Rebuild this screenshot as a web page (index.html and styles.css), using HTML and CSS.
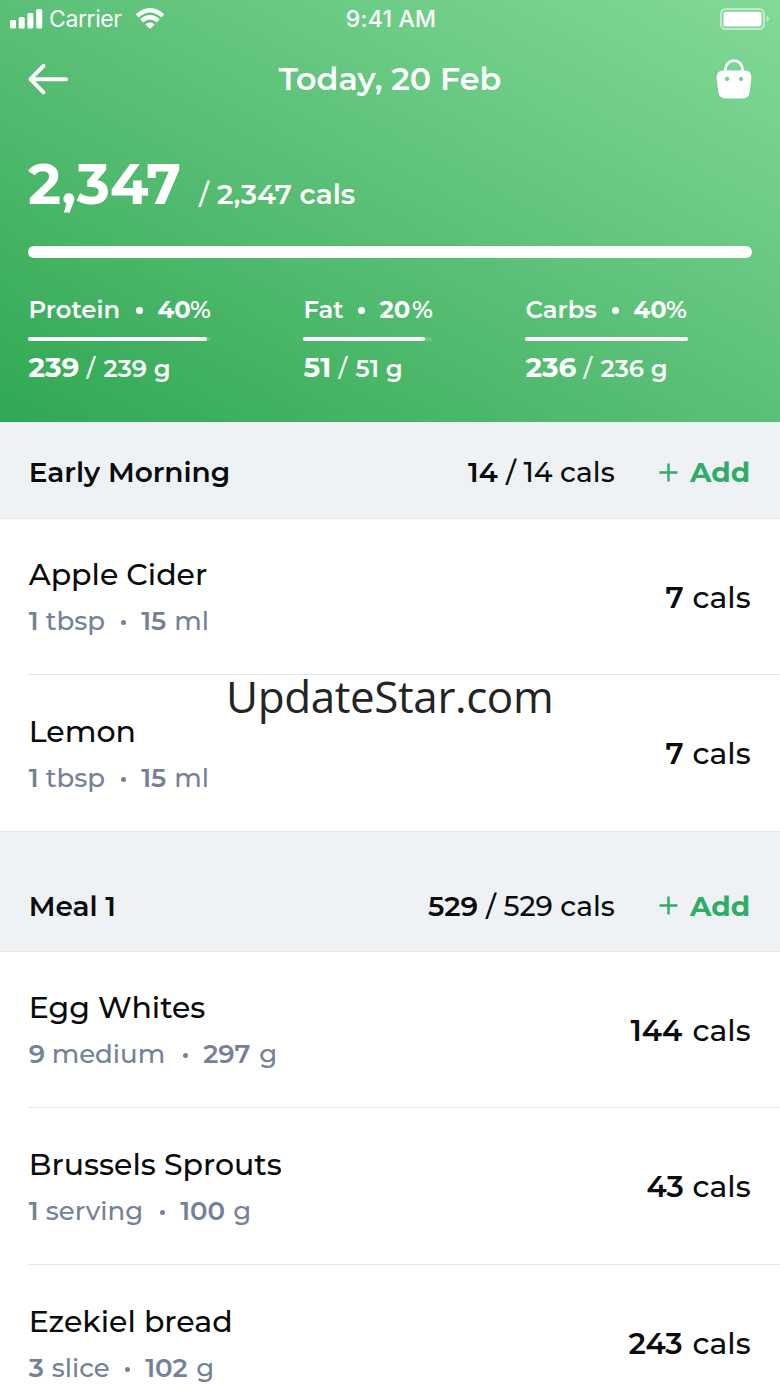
FILE: index.html
```
<!DOCTYPE html>
<html lang="en">
<head>
<meta charset="utf-8">
<title>Today, 20 Feb</title>
<link rel="stylesheet" href="styles.css">
</head>
<body>
<main class="app">
  <header class="hero">
    <div class="status">
      <div class="status-left">
        <svg class="signal" width="33" height="20" viewBox="0 0 33 20" fill="#fff"><rect x="0" y="11" width="6" height="8.500" rx="1.500"/><rect x="8.700" y="8" width="6" height="11.500" rx="1.500"/><rect x="17.400" y="4" width="6" height="15.500" rx="1.500"/><rect x="26.200" y="0" width="6" height="19.500" rx="1.500"/></svg>
        <span class="carrier">Carrier</span>
        <svg class="wifi" width="30" height="22" viewBox="0 0 30 22"><g fill="none" stroke="#fff" stroke-width="4.200"><path d="M2.200 7.800 Q15 -3.400 27.800 7.800"/><path d="M6.700 12.800 Q15 5.800 23.300 12.800"/></g><path d="M10.400 16.300 Q15 12.700 19.600 16.300 L15.900 20.200 Q15 21 14.100 20.200Z" fill="#fff"/></svg>
      </div>
      <span class="clock">9:41 AM</span>
      <svg class="battery" width="50" height="22" viewBox="0 0 50 22"><rect x="1" y="1" width="43" height="20" rx="4.500" fill="none" stroke="#fff" stroke-opacity=".5" stroke-width="2"/><rect x="3.500" y="3.700" width="38" height="14.800" rx="2" fill="#fff"/><path d="M46.500 7.500 Q49 9 49 10.800 Q49 12.500 46.500 14Z" fill="#fff" fill-opacity=".5"/></svg>
    </div>
    <nav class="nav">
      <svg width="42" height="34" viewBox="0 0 42 34" fill="none" stroke="#fff" stroke-width="4" stroke-linecap="round" stroke-linejoin="round"><path d="M39 17.200H3.500M16.500 3.800 3.500 17.200 16.500 30.300"/></svg>
      <h1 class="title">Today, 20 Feb</h1>
      <svg width="36" height="42" viewBox="0 0 36 42"><path d="M9.500 14V11.200a8.500 8.500 0 0 1 17 0V14" fill="none" stroke="#fff" stroke-width="2.800"/><path fill="#fff" fill-rule="evenodd" d="M7.500 12.500H28.500Q35.600 12.500 35.400 19.500L33.800 33.500Q33 40.500 26 40.500H10Q3 40.500 2.200 33.500L.6 19.500Q.4 12.500 7.500 12.500ZM11.100 18.800a2.200 2.200 0 1 0 .01 0ZM25 18.800a2.200 2.200 0 1 0 .01 0Z"/></svg>
    </nav>
    <div class="total">
      <span class="total-now">2,347</span>
      <span class="total-slash">/</span>
      <span class="total-goal">2,347 cals</span>
    </div>
    <div class="bar"></div>
    <div class="macros">
      <section class="macro protein">
        <div class="macro-head"><span class="macro-name">Protein</span><i class="dot"></i><b>40</b><span>%</span></div>
        <div class="track"><div class="fill"></div></div>
        <div class="macro-val"><b>239</b><span class="slash">/</span><span>239 g</span></div>
      </section>
      <section class="macro fat">
        <div class="macro-head"><span class="macro-name">Fat</span><i class="dot"></i><b>20</b><span>%</span></div>
        <div class="track"><div class="fill"></div></div>
        <div class="macro-val"><b>51</b><span class="slash">/</span><span>51 g</span></div>
      </section>
      <section class="macro carbs">
        <div class="macro-head"><span class="macro-name">Carbs</span><i class="dot"></i><b>40</b><span>%</span></div>
        <div class="track"><div class="fill"></div></div>
        <div class="macro-val"><b>236</b><span class="slash">/</span><span>236 g</span></div>
      </section>
    </div>
  </header>

  <section class="meal">
    <div class="meal-head">
      <h2>Early Morning</h2>
      <div class="meal-cals m14"><b>14</b><span class="slash">/</span><span>14 cals</span></div>
      <div class="add"><svg width="19" height="19" viewBox="0 0 19 19" stroke="#2fac66" stroke-width="2.400"><path d="M.5 9.500H18.500M9.500 .5V18.500"/></svg><span>Add</span></div>
    </div>
    <article class="food">
      <div><h3>Apple Cider</h3><p class="tbsp"><b>1</b><span class="unit">tbsp</span><i class="dot"></i><b class="amt">15</b><span>ml</span></p></div>
      <div class="cals c7"><b>7</b><span>cals</span></div>
    </article>
    <article class="food">
      <div><h3>Lemon</h3><p class="tbsp"><b>1</b><span class="unit">tbsp</span><i class="dot"></i><b class="amt">15</b><span>ml</span></p></div>
      <div class="cals c7"><b>7</b><span>cals</span></div>
    </article>
  </section>

  <section class="meal">
    <div class="meal-head spaced">
      <h2>Meal 1</h2>
      <div class="meal-cals m529"><b>529</b><span class="slash">/</span><span>529 cals</span></div>
      <div class="add"><svg width="19" height="19" viewBox="0 0 19 19" stroke="#2fac66" stroke-width="2.400"><path d="M.5 9.500H18.500M9.500 .5V18.500"/></svg><span>Add</span></div>
    </div>
    <article class="food">
      <div><h3>Egg Whites</h3><p class="medium"><b>9</b><span class="unit">medium</span><i class="dot"></i><b class="amt">297</b><span>g</span></p></div>
      <div class="cals c144"><b>144</b><span>cals</span></div>
    </article>
    <article class="food">
      <div><h3>Brussels Sprouts</h3><p class="serving"><b>1</b><span class="unit">serving</span><i class="dot"></i><b class="amt">100</b><span>g</span></p></div>
      <div class="cals c43"><b>43</b><span>cals</span></div>
    </article>
    <article class="food">
      <div><h3>Ezekiel bread</h3><p class="slice"><b>3</b><span class="unit">slice</span><i class="dot"></i><b class="amt">102</b><span>g</span></p></div>
      <div class="cals c243"><b>243</b><span>cals</span></div>
    </article>
  </section>
  <div class="watermark">UpdateStar.com</div>
</main>
</body>
</html>
```
FILE: styles.css
```
* { box-sizing: border-box; }
body { margin: 0; font-family: Montserrat, Inter, sans-serif; font-weight: 500; color: #090b0c; background: #fff; }
h1, h2, h3, p { margin: 0; font-weight: inherit; }
span, b { flex: none; white-space: nowrap; }
svg { display: block; flex: none; }
.app { position: relative; width: 780px; height: 1387px; overflow: hidden; }

/* green summary */
.hero { height: 422px; color: #fff; background: linear-gradient(to top right, #30a853 0%, #5bc077 50%, #82da97 100%); }
.status { height: 38px; padding: 0 10px 0 10px; display: grid; grid-template-columns: 1fr auto 1fr; align-items: center; font-family: Inter, sans-serif; font-size: 23px; line-height: 38px; }
.status-left { display: flex; align-items: center; }
.carrier { width: 86px; margin-left: 6px; font-weight: 400; letter-spacing: -.4px; }
.clock { margin-left: 2px; letter-spacing: .2px; }
.battery { justify-self: end; }
.nav { height: 82px; padding: 0 28px 0 27px; display: flex; align-items: center; justify-content: space-between; }
.title { margin-right: 5px; padding-bottom: 1px; font-size: 31.8px; font-weight: 600; }
.total { height: 85px; margin-top: 39px; margin-bottom: 2px; padding-left: 28px; display: flex; align-items: baseline; line-height: 50px; }
.total-now { width: 171px; font-size: 56px; font-weight: 700; }
.total-slash { width: 18px; font-size: 28px; font-weight: 500; }
.total-goal { font-size: 28px; font-weight: 600; }
.bar { height: 12px; margin: 0 28px; border-radius: 6px; background: #fff; }
.macros { display: flex; padding: 35px 28px 0; }
.protein { width: 275px; }
.fat { width: 222px; }
.macro-head, .macro-val { display: flex; align-items: baseline; font-size: 24.3px; font-weight: 600; line-height: 32px; }
.macro-head { padding-left: .5px; }
.macro-head .dot { width: 7px; height: 7px; margin-right: 15px; align-self: center; margin-top: 2px; }
.macro-head b { width: 32.5px; font-weight: 700; }
.protein .macro-name { width: 107px; }
.fat .macro-name { width: 54px; }
.carbs .macro-name { width: 86px; }
.dot { flex: none; width: 5px; height: 5px; border-radius: 50%; background: currentColor; }
.track { height: 4px; margin: 12px 0 10px; border-radius: 2px; background: rgba(255,255,255,.16); }
.fill { height: 4px; border-radius: 2px; background: #fff; }
.protein .track { width: 183px; }
.protein .fill { width: 179px; }
.fat .track { width: 129px; }
.fat .fill { width: 122px; }
.carbs .track { width: 163px; }
.macro-val { padding-left: .5px; }
.macro-val b { width: 58px; font-size: 28px; font-weight: 700; }
.macro-val .slash { width: 17px; font-weight: 500; }
.fat .macro-val b { width: 35px; }

/* meal sections */
.meal-head { display: flex; align-items: center; height: 97px; padding: 4px 30px 0 28.7px; font-size: 28px; background: #eef2f5; border-bottom: 1px solid #e2e6e9; }
.meal-head.spaced { height: 121px; padding-top: 28px; border-top: 1px solid #e2e6e9; }
.meal-head h2 { flex: 1; font-size: 28px; font-weight: 600; }
.meal-cals { display: flex; }
.meal-cals b { font-weight: 600; }
.m14 { width: 191px; }
.m14 b { width: 38px; }
.m529 { width: 231px; }
.m529 b { width: 58px; }
.meal-cals .slash { width: 17.5px; }
.add { display: flex; align-items: center; gap: 12px; width: 91px; color: #2fac66; font-weight: 700; }
.food { height: 155px; margin-left: 28px; padding: 0 27px 0 .7px; display: flex; justify-content: space-between; align-items: center; }
.food + .food { height: 157px; border-top: 1px solid #e4e5e6; }
.food h3 { padding-top: 3px; font-size: 30px; line-height: 46px; }
.food p { display: flex; align-items: baseline; font-size: 26px; line-height: 46px; color: #748199; }
.food b { font-weight: 600; }
.food p .dot { align-self: center; margin-top: 3px; margin-right: 15px; }
.tbsp > b:first-child, .serving > b:first-child { width: 17px; }
.medium > b:first-child, .slice > b:first-child { width: 23px; }
.tbsp .unit { width: 75.5px; }
.medium .unit { width: 131.5px; }
.serving .unit { width: 114.5px; }
.slice .unit { width: 73.5px; }
.tbsp .amt { width: 33px; }
.medium .amt { width: 56px; }
.serving .amt { width: 53px; }
.slice .amt { width: 51px; }
.cals { display: flex; font-size: 29.8px; }
.cals span { width: 60.5px; }
.c7 b { width: 27px; }
.c144 b { width: 62px; }
.c43 b { width: 46px; }
.c243 b { width: 64px; }

.watermark { position: absolute; left: 226px; top: 666px; font: 400 44px/60px "Open Sans", sans-serif; letter-spacing: -.4px; color: #222425; }
```
